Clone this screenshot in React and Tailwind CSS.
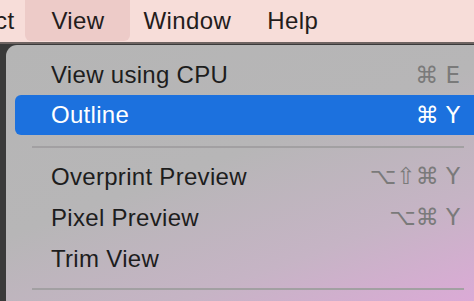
export default function App() {
  const sans = "font-['Liberation_Sans','DejaVu_Sans',sans-serif]";
  const keys = "font-['DejaVu_Sans','Liberation_Sans',sans-serif]";

  return (
    <div className={`w-[474px] h-[301px] overflow-hidden flex flex-col ${sans}`}>
      {/* Menu bar */}
      <div className="h-[44px] shrink-0 bg-[#f7ddd9] border-b-2 border-[#6e6462] flex items-stretch text-[24px] tracking-[0.4px] text-[#231c1c]">
        <div className="ml-[-5px] flex items-center">ct</div>
        <div className="ml-[11px] w-[105px] mb-[1px] rounded-b-md bg-[#edcbc8] flex items-center justify-center">
          View
        </div>
        <div className="ml-[13px] flex items-center">Window</div>
        <div className="ml-[36px] flex items-center">Help</div>
      </div>

      {/* Below bar */}
      <div className="flex flex-1 bg-[#3a3a3a]">
        <div className="w-[6px] shrink-0" />
        <div className="flex-1 mt-[1px] rounded-tl-[11px] bg-[linear-gradient(160deg,#b5b5b5_0%,#b7b6b7_45%,#c6b4c5_75%,#dbaad6_100%)] pt-[10px] text-[24px] tracking-[0.3px] text-[#1d1d1d]">
          <MenuRow label="View using CPU" keys="⌘ E" />
          <MenuRow label="Outline" keys="⌘ Y" active />
          <Separator top="pt-[11px]" bottom="pb-[8px]" />
          <MenuRow label="Overprint Preview" keys="⌥⇧⌘ Y" tall />
          <MenuRow label="Pixel Preview" keys="⌥⌘ Y" tall />
          <MenuRow label="Trim View" tall />
          <Separator top="pt-[9px]" bottom="pb-[4px]" />
        </div>
      </div>
    </div>
  );

  function MenuRow({ label, keys: shortcut, active, tall }) {
    return (
      <div
        className={`ml-[9px] flex items-center justify-between pl-[36px] pr-[14px] ${
          tall ? "h-[41px]" : "h-[40px]"
        } ${active ? "bg-[#1c71de] text-white rounded-l-md" : ""}`}
      >
        <span>{label}</span>
        {shortcut && (
          <span className={`${keys} text-[23px] tracking-normal ${active ? "text-white" : "text-[#7a7a7a]"}`}>
            {shortcut}
          </span>
        )}
      </div>
    );
  }

  function Separator({ top, bottom }) {
    return (
      <div className={`${top} ${bottom} pl-[26px] pr-[10px]`}>
        <div className="h-[2px] bg-[#a2a0a2]" />
      </div>
    );
  }
}
